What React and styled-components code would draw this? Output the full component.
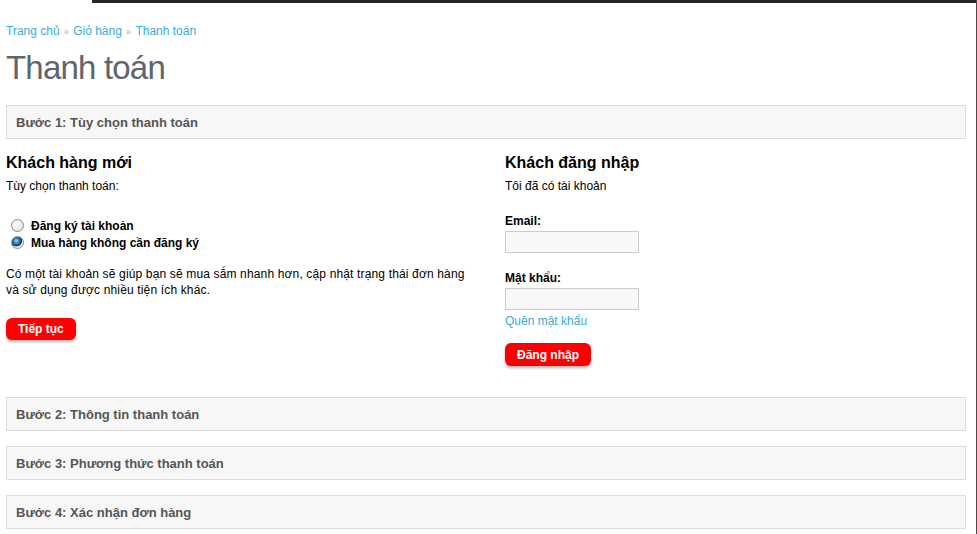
import React from "react";
import styled, { createGlobalStyle } from "styled-components";

const GlobalStyle = createGlobalStyle`
    body {
        margin: 0;
        font-family: "Liberation Sans", Arial, sans-serif;
        font-size: 12px;
        color: #000;
        background: #fff;
    }
`

const Page = styled.div`
    min-height: 534px;
    box-sizing: border-box;
    border-right: 1px solid #514848;
`

const TopStrip = styled.div`
    height: 3px;
    margin-left: 92px;
    background-color: #262626;
`

const Content = styled.div`
    width: 960px;
    margin-left: 6px;
`

const Breadcrumb = styled.div`
    margin-top: 20px;
    line-height: 16px;
    font-size: 12px;
    color: #3aa9e0;
`

const Crumb = styled.a`
    color: #3aa9e0;
    text-decoration: none;
`

const Sep = styled.span`
    color: #b5b5b5;
    font-size: 10px;
    margin: 0 4px;
`

const Title = styled.h1`
    margin: 9px 0 18px;
    font-size: 33px;
    line-height: 38px;
    letter-spacing: -0.8px;
    font-weight: normal;
    color: #5e656d;
`

const Step = styled.div`
    height: 32px;
    box-sizing: content-box;
    line-height: 34px;
    padding-left: 9px;
    border: 1px solid #dcdcdc;
    background-color: #f7f7f7;
    color: #555;
    font-size: 13px;
    font-weight: bold;
    margin-bottom: ${props => props.$gap ?? 15}px;
`

const Columns = styled.div`
    display: grid;
    grid-template-columns: 499px 1fr;
    padding-bottom: 31px;
`

const Column = styled.div`
    display: flex;
    flex-direction: column;
    align-items: flex-start;
`

const Heading = styled.h2`
    margin: 14px 0 0;
    font-size: 16px;
    line-height: 20px;
    font-weight: bold;
`

const Text = styled.p`
    margin: ${props => props.$top || 0}px 0 0;
    line-height: 16px;
    letter-spacing: ${props => props.$spread || 0}px;
`

const RadioRow = styled.label`
    display: flex;
    align-items: center;
    height: 17px;
    margin-top: ${props => props.$top || 0}px;
    font-weight: bold;
`

const Radio = styled.input`
    appearance: none;
    width: 13px;
    height: 13px;
    margin: 0 7px 0 5px;
    border-radius: 50%;
    border: 1px solid #8a8a8a;
    background: radial-gradient(circle at 40% 35%, #ffffff 0%, #dcdcdc 100%);
    box-sizing: border-box;

    &:checked {
        background: radial-gradient(circle at 40% 35%, #9fd0f0 0%, #1f6da8 35%, #0d3f66 55%, #e6e6e6 60%, #ffffff 100%);
    }
`

const Button = styled.button`
    height: ${props => props.$h || 22}px;
    margin-top: ${props => props.$top || 0}px;
    padding: 0 12px;
    border: none;
    border-radius: 6px;
    background-color: #ff0000;
    color: white;
    font-family: "Liberation Sans", Arial, sans-serif;
    font-size: 12px;
    font-weight: bold;
    box-shadow: 0 2px 3px rgba(0, 0, 0, 0.3);
    cursor: pointer;
`

const Label = styled.div`
    margin-top: ${props => props.$top || 0}px;
    line-height: 16px;
    font-weight: bold;
`

const Input = styled.input`
    width: 134px;
    height: 22px;
    margin-top: 2px;
    box-sizing: border-box;
    border: 1px solid #cccccc;
    background-color: #f8f8f8;
`

const Link = styled.a`
    margin-top: 3px;
    line-height: 16px;
    color: #3aa9e0;
    text-decoration: none;
`

class App extends React.Component {
    render() {
        return (
            <Page>
                <GlobalStyle />
                <TopStrip />
                <Content>
                    <Breadcrumb>
                        <Crumb href="#">Trang chủ</Crumb>
                        <Sep>»</Sep>
                        <Crumb href="#">Giỏ hàng</Crumb>
                        <Sep>»</Sep>
                        <Crumb href="#">Thanh toán</Crumb>
                    </Breadcrumb>
                    <Title>Thanh toán</Title>

                    <Step $gap={0}>Bước 1: Tùy chọn thanh toán</Step>
                    <Columns>
                        <Column>
                            <Heading>Khách hàng mới</Heading>
                            <Text $top={5}>Tùy chọn thanh toán:</Text>
                            <RadioRow $top={23}>
                                <Radio type="radio" name="account" />
                                Đăng ký tài khoản
                            </RadioRow>
                            <RadioRow>
                                <Radio type="radio" name="account" defaultChecked />
                                Mua hàng không cần đăng ký
                            </RadioRow>
                            <Text $top={15} $spread={0.15}>
                                Có một tài khoản sẽ giúp bạn sẽ mua sắm nhanh hơn, cập nhật trạng thái đơn hàng
                                <br />và sử dụng được nhiều tiện ích khác.
                            </Text>
                            <Button $top={20}>Tiếp tục</Button>
                        </Column>
                        <Column>
                            <Heading>Khách đăng nhập</Heading>
                            <Text $top={5}>Tôi đã có tài khoản</Text>
                            <Label $top={19}>Email:</Label>
                            <Input type="text" />
                            <Label $top={17}>Mật khẩu:</Label>
                            <Input type="password" />
                            <Link href="#">Quên mật khẩu</Link>
                            <Button $top={14} $h={23}>Đăng nhập</Button>
                        </Column>
                    </Columns>

                    <Step>Bước 2: Thông tin thanh toán</Step>
                    <Step>Bước 3: Phương thức thanh toán</Step>
                    <Step>Bước 4: Xác nhận đơn hàng</Step>
                </Content>
            </Page>
        )
    }
}

export default App
